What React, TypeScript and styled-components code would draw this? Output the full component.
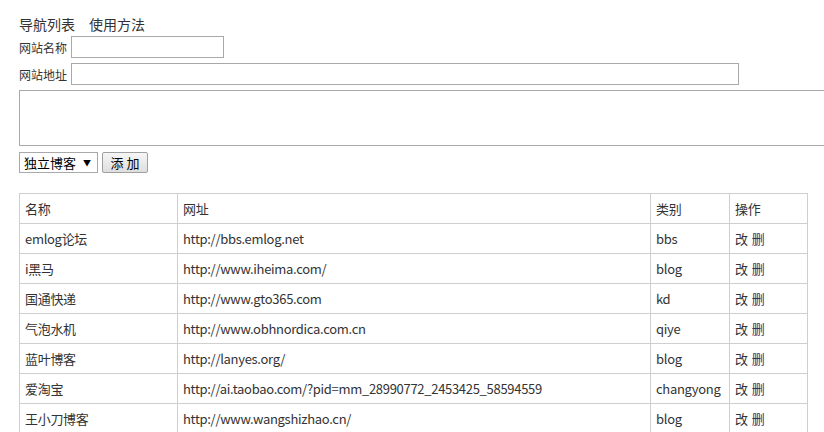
import React from "react";
import styled, { createGlobalStyle } from "styled-components";

const Global = createGlobalStyle`
  html, body { margin: 0; padding: 0; background: #fff; }
  body { font-family: "Microsoft YaHei", "Noto Sans CJK SC", "Noto Sans", sans-serif; color: #333; overflow: hidden; }
`;

const Page = styled.div`
  padding: 14px 0 0 19px;
  width: 900px;
`;

const Nav = styled.div`
  display: flex;
  gap: 14px;
  font-size: 14px;
  line-height: 20px;
  height: 20px;
  margin-bottom: 2px;
`;

const NavItem = styled.span`
  color: #333;
`;

const Row = styled.div`
  display: flex;
  align-items: center;
  gap: 3px;
  height: 22px;
  margin-bottom: 5px;
`;

const Label = styled.span`
  font-size: 12px;
  color: #333;
  width: 49px;
`;

const TextInput = styled.input<{ $w: number }>`
  box-sizing: border-box;
  width: ${(p) => p.$w}px;
  height: 22px;
  border: 1px solid #a9a9a9;
  padding: 0 2px;
  margin: 0;
  outline: none;
  font: inherit;
`;

const TextArea = styled.textarea`
  display: block;
  box-sizing: border-box;
  width: 820px;
  height: 56px;
  border: 1px solid #a9a9a9;
  margin: 0 0 6px 0;
  padding: 2px;
  resize: none;
  outline: none;
`;

const Controls = styled.div`
  display: flex;
  gap: 4px;
  height: 21px;
  margin-bottom: 20px;
`;

const Select = styled.div`
  box-sizing: border-box;
  width: 79px;
  height: 21px;
  border: 1px solid #a9a9a9;
  display: flex;
  align-items: center;
  justify-content: space-between;
  padding: 0 6px 0 4px;
  font-family: "Noto Sans CJK SC", sans-serif;
  font-size: 13px;
  color: #000;
`;

const Arrow = styled.span`
  font-size: 8px;
  color: #000;
`;

const Button = styled.button`
  box-sizing: border-box;
  width: 46px;
  height: 21px;
  border: 1px solid #a0a0a0;
  border-radius: 2px;
  background: linear-gradient(#f6f6f6, #dedede);
  font-family: "Noto Sans CJK SC", sans-serif;
  font-size: 13px;
  color: #000;
  padding: 0;
  line-height: 19px;
  white-space: pre;
`;

const Table = styled.table`
  border-collapse: collapse;
  width: 789px;
  table-layout: fixed;
  font-size: 13px;
  letter-spacing: -0.3px;
`;

const Cell = styled.td<{ $w?: number }>`
  border: 1px solid #cfcfcf;
  height: 29px;
  padding: 0 5px;
  color: #333;
  white-space: nowrap;
  ${(p) => (p.$w ? `width: ${p.$w}px;` : "")}
`;

const Head = styled(Cell).attrs({ as: "th" })`
  font-weight: normal;
  text-align: left;
`;

const Op = styled.a<{ $del?: boolean }>`
  color: ${(p) => (p.$del ? "#33336a" : "#333")};
  text-decoration: none;
  margin-right: 4px;
`;

const rows = [
  ["emlog论坛", "http://bbs.emlog.net", "bbs"],
  ["i黑马", "http://www.iheima.com/", "blog"],
  ["国通快递", "http://www.gto365.com", "kd"],
  ["气泡水机", "http://www.obhnordica.com.cn", "qiye"],
  ["蓝叶博客", "http://lanyes.org/", "blog"],
  ["爱淘宝", "http://ai.taobao.com/?pid=mm_28990772_2453425_58594559", "changyong"],
  ["王小刀博客", "http://www.wangshizhao.cn/", "blog"],
];

export default function App() {
  return (
    <>
      <Global />
      <Page>
        <Nav>
          <NavItem>导航列表</NavItem>
          <NavItem>使用方法</NavItem>
        </Nav>
        <Row>
          <Label>网站名称</Label>
          <TextInput $w={153} />
        </Row>
        <Row>
          <Label>网站地址</Label>
          <TextInput $w={668} />
        </Row>
        <TextArea />
        <Controls>
          <Select>
            <span>独立博客</span>
            <Arrow>▼</Arrow>
          </Select>
          <Button>{"添 加"}</Button>
        </Controls>
        <Table>
          <thead>
            <tr>
              <Head $w={147}>名称</Head>
              <Head $w={462}>网址</Head>
              <Head $w={68}>类别</Head>
              <Head>操作</Head>
            </tr>
          </thead>
          <tbody>
            {rows.map((r) => (
              <tr key={r[0]}>
                <Cell>{r[0]}</Cell>
                <Cell>{r[1]}</Cell>
                <Cell>{r[2]}</Cell>
                <Cell>
                  <Op href="#">改</Op>
                  <Op href="#" $del>删</Op>
                </Cell>
              </tr>
            ))}
          </tbody>
        </Table>
      </Page>
    </>
  );
}
